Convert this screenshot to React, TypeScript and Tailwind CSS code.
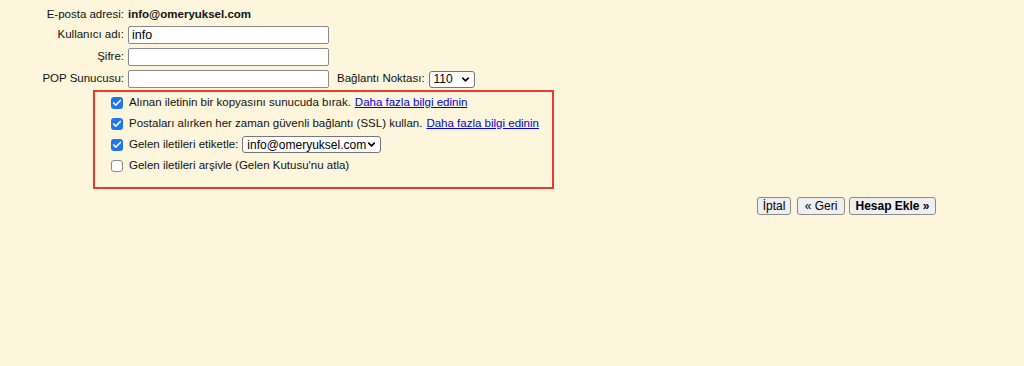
import { Check, ChevronDown } from "lucide-react";

function FakeSelect({ value, width }: { value: string; width: string }) {
  return (
    <span
      className={`flex h-[17px] ${width} items-center justify-between rounded-[3px] border border-[#767676] bg-white pl-[4px] pr-[3px] text-[12px] leading-none text-black`}
    >
      <span>{value}</span>
      <ChevronDown size={11} strokeWidth={3.5} />
    </span>
  );
}

function Box({ checked }: { checked: boolean }) {
  return checked ? (
    <span className="flex h-[12px] w-[12px] shrink-0 items-center justify-center rounded-[3px] bg-[#1d74f5]">
      <Check size={10} strokeWidth={4} className="text-white" />
    </span>
  ) : (
    <span className="h-[12px] w-[12px] shrink-0 rounded-[3px] border border-[#8a8a8a] bg-white" />
  );
}

const options = [
  { checked: true, text: "Alınan iletinin bir kopyasını sunucuda bırak.", link: true },
  { checked: true, text: "Postaları alırken her zaman güvenli bağlantı (SSL) kullan.", link: true },
  { checked: true, text: "Gelen iletileri etiketle:", select: true },
  { checked: false, text: "Gelen iletileri arşivle (Gelen Kutusu'nu atla)" },
];

export default function App() {
  return (
    <div className="h-[366px] w-[1024px] bg-[#fef6dc] pt-[5px] font-['Liberation_Sans',Arial,sans-serif] text-[11.5px] text-[#111]">
      {/* Account fields */}
      <div className="flex h-[19px] items-center gap-[4px]">
        <span className="w-[124px] text-right">E-posta adresi:</span>
        <span className="font-bold">info@omeryuksel.com</span>
      </div>
      <div className="flex h-[22px] items-center gap-[4px]">
        <span className="w-[124px] text-right">Kullanıcı adı:</span>
        <span className="flex h-[18px] w-[201px] items-center rounded-[2px] border border-[#8a8a8a] bg-white px-[3px] text-[12.5px] text-black">
          info
        </span>
      </div>
      <div className="flex h-[22px] items-center gap-[4px]">
        <span className="w-[124px] text-right">Şifre:</span>
        <span className="h-[18px] w-[201px] rounded-[2px] border border-[#8a8a8a] bg-white" />
      </div>
      <div className="flex h-[22px] items-center gap-[4px]">
        <span className="w-[124px] text-right">POP Sunucusu:</span>
        <span className="h-[18px] w-[201px] rounded-[2px] border border-[#8a8a8a] bg-white" />
        <span className="ml-[4px]">Bağlantı Noktası:</span>
        <FakeSelect value="110" width="w-[46px]" />
      </div>

      {/* Options box */}
      <div className="ml-[93px] w-[461px] border-2 border-[#ea3a2c] pb-[11px] pl-[16px]">
        {options.map((o) => (
          <div key={o.text} className="flex h-[21px] items-center gap-[6px]">
            <Box checked={o.checked} />
            <span className="flex items-center gap-[4px]">
              <span>{o.text}</span>
              {o.link && <span className="text-[#0000ee] underline">Daha fazla bilgi edinin</span>}
              {o.select && <FakeSelect value="info@omeryuksel.com" width="w-[139px]" />}
            </span>
          </div>
        ))}
      </div>

      {/* Actions */}
      <div className="mt-[8px] flex justify-end pr-[88px] text-[12px]">
        <button className="h-[18px] w-[34px] rounded-[3px] border border-[#8a8a8a] bg-[#efefef] leading-none text-black">
          İptal
        </button>
        <button className="ml-[6px] h-[18px] w-[48px] rounded-[3px] border border-[#8a8a8a] bg-[#efefef] leading-none text-black">
          « Geri
        </button>
        <button className="ml-[4px] h-[18px] w-[87px] rounded-[3px] border border-[#8a8a8a] bg-[#efefef] font-bold leading-none text-black">
          Hesap Ekle »
        </button>
      </div>
    </div>
  );
}
